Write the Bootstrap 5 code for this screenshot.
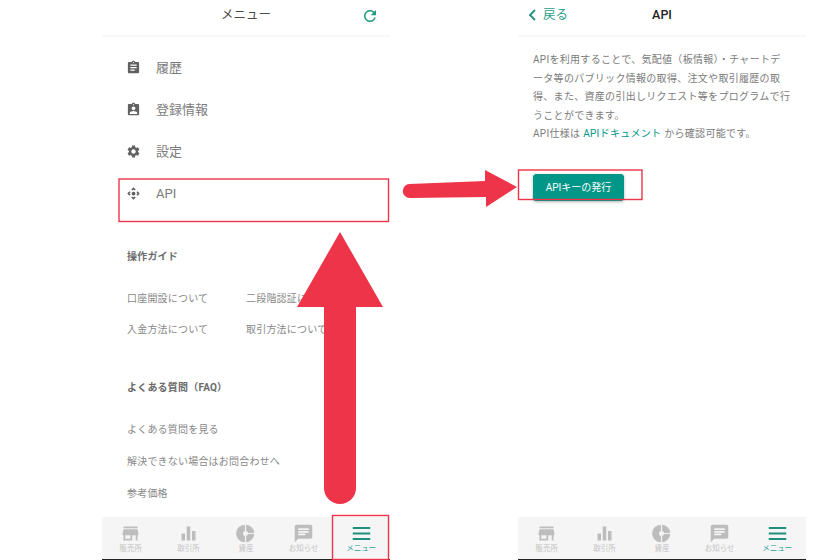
<!DOCTYPE html>
<html lang="ja">
<head>
  <meta charset="UTF-8">
  <meta name="viewport" content="width=device-width, initial-scale=1.0">
  <title>API</title>
  <link href="https://cdn.jsdelivr.net/npm/bootstrap@5.3.0/dist/css/bootstrap.min.css" rel="stylesheet">
  <style>
    body {
      font-family: "Roboto", "Noto Sans CJK JP", sans-serif;
      color: #757575;
      background: #fff;
      overflow: hidden;
    }
    .stage {
      position: relative;
      width: 840px;
      height: 560px;
      padding-left: 102px;
      gap: 128px;
    }
    .phone {
      width: 288px;
      height: 560px;
    }
    .phone-head {
      height: 37px;
      flex: none;
      padding-bottom: 5px;
      border-bottom: 2px solid #f7f7f7;
    }
    .phone-title {
      font-size: 12.5px;
      color: #4a4a4a;
    }
    .phone-title.strong-title {
      color: #222;
      font-weight: 500;
    }
    .phone-body {
      flex: 1 1 auto;
      min-height: 0;
    }
    .menu-list {
      padding: 11px 0 0 24px;
    }
    .menu-row {
      height: 42px;
      gap: 15px;
      font-size: 13px;
      color: #7b7b7b;
      padding-bottom: 3px;
    }
    .menu-row svg {
      width: 15px;
      height: 15px;
      fill: #616161;
    }
    .guide-head {
      font-size: 10px;
      font-weight: 700;
      color: #6a6a6a;
      line-height: 14px;
      letter-spacing: .2px;
    }
    .guide-link {
      font-size: 10px;
      color: #888;
      line-height: 14px;
      letter-spacing: .2px;
      white-space: nowrap;
    }
    .guide {
      padding-left: 25px;
    }
    .guide-grid {
      display: grid;
      grid-template-columns: 119px 119px;
      row-gap: 17px;
      margin-top: 28px;
    }
    .guide-stack {
      row-gap: 18px;
      margin-top: 28px;
    }
    .api-text {
      padding: 14px 0 0 15px;
      font-size: 10px;
      line-height: 18.6px;
      letter-spacing: .3px;
      color: #7b7b7b;
      white-space: nowrap;
    }
    .api-text a {
      color: #009688;
      text-decoration: none;
    }
    .issue-btn {
      --bs-btn-bg: #009688;
      --bs-btn-border-color: #009688;
      --bs-btn-color: #fff;
      --bs-btn-font-size: 10px;
      --bs-btn-padding-x: 0;
      --bs-btn-padding-y: 0;
      --bs-btn-border-radius: 3px;
      width: 91px;
      height: 27px;
      margin: 30px 0 0 15px;
      box-shadow: 0 1px 3px rgba(0, 0, 0, .3);
    }
    .back-link {
      left: 9px;
      top: 6px;
      font-size: 12.5px;
      color: #2a9d8c;
      gap: 6px;
    }
    .reload-icon {
      right: 11px;
      top: 7px;
    }
    .tabbar {
      flex: none;
      height: 43px;
      background: #f5f5f5;
      border-bottom: 1px solid #222;
    }
    .tab {
      flex: 1 1 0;
      font-size: 7.5px;
      color: #c4c4c4;
      line-height: 10px;
    }
    .tab svg {
      width: 21px;
      height: 21px;
      fill: #bdbdbd;
    }
    .tab.is-on {
      color: #26a091;
    }
    .tab.is-on svg {
      fill: #1f8f7e;
    }
    .overlay {
      position: absolute;
      left: 0;
      top: 0;
      pointer-events: none;
    }
  </style>
</head>
<body>
  <div class="stage d-flex">

    <!-- left screen: menu -->
    <div class="phone d-flex flex-column">
      <div class="phone-head d-flex align-items-center position-relative justify-content-center">
        <span class="phone-title">メニュー</span>
        <svg class="reload-icon position-absolute" width="18" height="18" viewBox="0 0 24 24" fill="#1f9a87"><path d="M17.65 6.35C16.2 4.9 14.21 4 12 4c-4.42 0-7.99 3.58-7.99 8s3.57 8 7.99 8c3.73 0 6.84-2.55 7.73-6h-2.08c-.82 2.33-3.04 4-5.65 4-3.31 0-6-2.69-6-6s2.69-6 6-6c1.66 0 3.14.69 4.22 1.78L13 11h7V4l-2.35 2.35z"/></svg>
      </div>
      <div class="phone-body">
        <div class="menu-list">
          <div class="menu-row d-flex align-items-center">
            <svg viewBox="0 0 24 24"><path d="M19 3h-4.18C14.4 1.84 13.3 1 12 1c-1.3 0-2.4.84-2.82 2H5c-1.1 0-2 .9-2 2v14c0 1.1.9 2 2 2h14c1.1 0 2-.9 2-2V5c0-1.1-.9-2-2-2zm-7 0c.55 0 1 .45 1 1s-.45 1-1 1-1-.45-1-1 .45-1 1-1zm2 14H7v-2h7v2zm3-4H7v-2h10v2zm0-4H7V7h10v2z"/></svg>
            <span>履歴</span>
          </div>
          <div class="menu-row d-flex align-items-center">
            <svg viewBox="0 0 24 24"><path d="M19 3h-4.18C14.4 1.84 13.3 1 12 1c-1.3 0-2.4.84-2.82 2H5c-1.1 0-2 .9-2 2v14c0 1.1.9 2 2 2h14c1.1 0 2-.9 2-2V5c0-1.1-.9-2-2-2zm-7 0c.55 0 1 .45 1 1s-.45 1-1 1-1-.45-1-1 .45-1 1-1zm0 4c1.66 0 3 1.34 3 3s-1.34 3-3 3-3-1.34-3-3 1.34-3 3-3zm6 12H6v-1.4c0-2 4-3.1 6-3.1s6 1.1 6 3.1V19z"/></svg>
            <span>登録情報</span>
          </div>
          <div class="menu-row d-flex align-items-center">
            <svg viewBox="0 0 24 24"><path d="M19.14 12.94c.04-.3.06-.61.06-.94 0-.32-.02-.64-.07-.94l2.03-1.58c.18-.14.23-.41.12-.61l-1.92-3.32c-.12-.22-.37-.29-.59-.22l-2.39.96c-.5-.38-1.03-.7-1.62-.94l-.36-2.54c-.04-.24-.24-.41-.48-.41h-3.84c-.24 0-.43.17-.47.41l-.36 2.54c-.59.24-1.13.57-1.62.94l-2.39-.96c-.22-.08-.47 0-.59.22L2.74 8.87c-.12.21-.08.47.12.61l2.03 1.58c-.05.3-.09.63-.09.94s.02.64.07.94l-2.03 1.58c-.18.14-.23.41-.12.61l1.92 3.32c.12.22.37.29.59.22l2.39-.96c.5.38 1.03.7 1.62.94l.36 2.54c.05.24.24.41.48.41h3.84c.24 0 .44-.17.47-.41l.36-2.54c.59-.24 1.13-.56 1.62-.94l2.39.96c.22.08.47 0 .59-.22l1.92-3.32c.12-.22.07-.47-.12-.61l-2.01-1.58zM12 15.6c-1.98 0-3.6-1.62-3.6-3.6s1.62-3.6 3.6-3.6 3.6 1.62 3.6 3.6-1.62 3.6-3.6 3.6z"/></svg>
            <span>設定</span>
          </div>
          <div class="menu-row d-flex align-items-center">
            <svg viewBox="0 0 24 24"><path d="M15.54 5.54L13.77 7.3 12 5.54 10.23 7.3 8.46 5.54 12 2zm2.92 10l-1.76-1.77L18.46 12l-1.76-1.77 1.76-1.77L22 12zm-10 2.92l1.77-1.76L12 18.46l1.77-1.76 1.77 1.76L12 22zm-2.92-10l1.76 1.77L5.54 12l1.76 1.77-1.76 1.77L2 12z"/><circle cx="12" cy="12" r="3"/></svg>
            <span>API</span>
          </div>
        </div>
        <div class="guide" style="margin-top:34px">
          <div class="guide-head">操作ガイド</div>
          <div class="guide-grid">
            <span class="guide-link">口座開設について</span>
            <span class="guide-link">二段階認証について</span>
            <span class="guide-link">入金方法について</span>
            <span class="guide-link">取引方法について</span>
          </div>
        </div>
        <div class="guide" style="margin-top:44px">
          <div class="guide-head">よくある質問（FAQ）</div>
          <div class="guide-stack d-flex flex-column">
            <span class="guide-link">よくある質問を見る</span>
            <span class="guide-link">解決できない場合はお問合わせへ</span>
            <span class="guide-link">参考価格</span>
          </div>
        </div>
      </div>
      <div class="tabbar d-flex">
        <div class="tab d-flex flex-column align-items-center justify-content-center">
          <svg viewBox="0 0 24 24"><path d="M20 4H4v2h16V4zm1 10v-2l-1-5H4l-1 5v2h1v6h10v-6h4v6h2v-6h1zm-9 4H6v-4h6v4z"/></svg>
          <span>販売所</span>
        </div>
        <div class="tab d-flex flex-column align-items-center justify-content-center">
          <svg viewBox="0 0 24 24"><path d="M10 20h4V4h-4v16zm-6 0h4v-8H4v8zM16 9v11h4V9h-4z"/></svg>
          <span>取引所</span>
        </div>
        <div class="tab d-flex flex-column align-items-center justify-content-center">
          <svg viewBox="0 0 24 24"><path d="M11.300 2v7.100a3 3 0 0 0 0 5.800V22a10 10 0 0 1 0-20zM12.700 2a10 10 0 0 1 9.300 9.300h-7.100a3 3 0 0 0-2.200-2.200zM14.900 12.700H22a10 10 0 0 1-9.300 9.300v-7.100a3 3 0 0 0 2.200-2.200z"/></svg>
          <span>資産</span>
        </div>
        <div class="tab d-flex flex-column align-items-center justify-content-center">
          <svg viewBox="0 0 24 24"><path d="M20 2H4c-1.1 0-1.99.9-1.99 2L2 22l4-4h14c1.1 0 2-.9 2-2V4c0-1.1-.9-2-2-2zM6 9h12v2H6V9zm8 5H6v-2h8v2zm4-6H6V6h12v2z"/></svg>
          <span>お知らせ</span>
        </div>
        <div class="tab is-on d-flex flex-column align-items-center justify-content-center">
          <svg viewBox="0 0 24 24"><path d="M2 19.500h20v-2.400H2zM2 13.200h20v-2.400H2zM2 4.500v2.400h20V4.500z"/></svg>
          <span>メニュー</span>
        </div>
      </div>
    </div>

    <!-- right screen: API -->
    <div class="phone d-flex flex-column">
      <div class="phone-head d-flex align-items-center position-relative justify-content-center">
        <span class="back-link position-absolute d-flex align-items-center">
          <svg width="10" height="14" viewBox="0 0 10 14" fill="none" stroke="#1f8f7e" stroke-width="1.800"><path d="M8 2L3 7l5 5"/></svg>
          戻る
        </span>
        <span class="phone-title strong-title">API</span>
      </div>
      <div class="phone-body d-flex flex-column align-items-start">
        <p class="api-text mb-0">APIを利用することで、気配値（板情報）・チャートデ<br>ータ等のパブリック情報の取得、注文や取引履歴の取<br>得、また、資産の引出しリクエスト等をプログラムで行<br>うことができます。<br>API仕様は <a href="#">APIドキュメント</a> から確認可能です。</p>
        <button type="button" class="btn issue-btn">APIキーの発行</button>
      </div>
      <div class="tabbar d-flex">
        <div class="tab d-flex flex-column align-items-center justify-content-center">
          <svg viewBox="0 0 24 24"><path d="M20 4H4v2h16V4zm1 10v-2l-1-5H4l-1 5v2h1v6h10v-6h4v6h2v-6h1zm-9 4H6v-4h6v4z"/></svg>
          <span>販売所</span>
        </div>
        <div class="tab d-flex flex-column align-items-center justify-content-center">
          <svg viewBox="0 0 24 24"><path d="M10 20h4V4h-4v16zm-6 0h4v-8H4v8zM16 9v11h4V9h-4z"/></svg>
          <span>取引所</span>
        </div>
        <div class="tab d-flex flex-column align-items-center justify-content-center">
          <svg viewBox="0 0 24 24"><path d="M11.300 2v7.100a3 3 0 0 0 0 5.800V22a10 10 0 0 1 0-20zM12.700 2a10 10 0 0 1 9.300 9.300h-7.100a3 3 0 0 0-2.200-2.200zM14.900 12.700H22a10 10 0 0 1-9.300 9.300v-7.100a3 3 0 0 0 2.200-2.200z"/></svg>
          <span>資産</span>
        </div>
        <div class="tab d-flex flex-column align-items-center justify-content-center">
          <svg viewBox="0 0 24 24"><path d="M20 2H4c-1.1 0-1.99.9-1.99 2L2 22l4-4h14c1.1 0 2-.9 2-2V4c0-1.1-.9-2-2-2zM6 9h12v2H6V9zm8 5H6v-2h8v2zm4-6H6V6h12v2z"/></svg>
          <span>お知らせ</span>
        </div>
        <div class="tab is-on d-flex flex-column align-items-center justify-content-center">
          <svg viewBox="0 0 24 24"><path d="M2 19.500h20v-2.400H2zM2 13.200h20v-2.400H2zM2 4.500v2.400h20V4.500z"/></svg>
          <span>メニュー</span>
        </div>
      </div>
    </div>

    <!-- red annotations drawn over the screenshots -->
    <svg class="overlay" width="840" height="560" viewBox="0 0 840 560">
      <g fill="none" stroke="#ee3449" stroke-width="1.400">
        <rect x="119" y="179" width="269.500" height="42.500"/>
        <rect x="518.500" y="170" width="123.500" height="29.500"/>
        <rect x="332.500" y="515.500" width="56" height="44"/>
      </g>
      <g fill="#ee3449">
        <path d="M340 232L383 307H356V488a16 16 0 0 1-32 0V307H297z"/>
        <path d="M485 170L517 187L486 207V197L410 198a7 7 0 0 1-.5-14L485 181z"/>
      </g>
    </svg>
  </div>

  <script src="https://cdn.jsdelivr.net/npm/bootstrap@5.3.0/dist/js/bootstrap.bundle.min.js"></script>
</body>
</html>
